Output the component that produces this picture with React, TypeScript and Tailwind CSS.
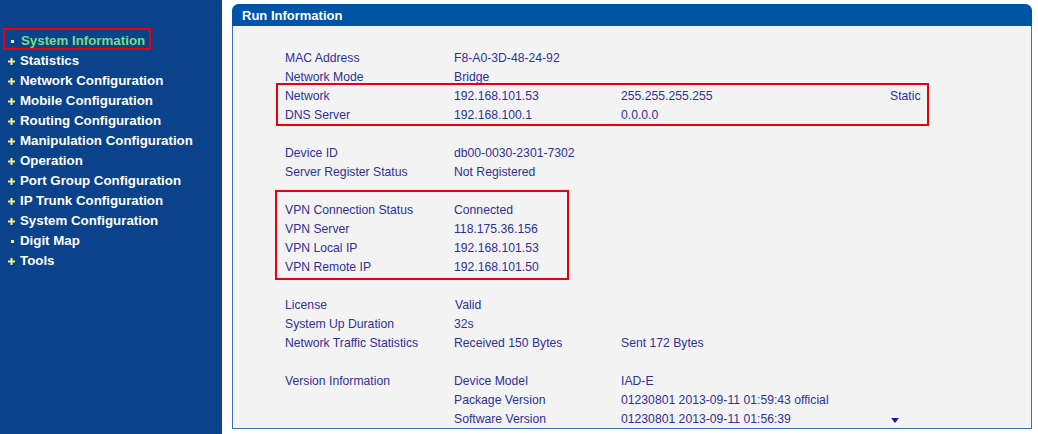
import React from "react";

const menu: { label: string; leaf?: boolean; active?: boolean }[] = [
  { label: "System Information", leaf: true, active: true },
  { label: "Statistics" },
  { label: "Network Configuration" },
  { label: "Mobile Configuration" },
  { label: "Routing Configuration" },
  { label: "Manipulation Configuration" },
  { label: "Operation" },
  { label: "Port Group Configuration" },
  { label: "IP Trunk Configuration" },
  { label: "System Configuration" },
  { label: "Digit Map", leaf: true },
  { label: "Tools" },
];

type Row = [string, React.ReactNode, string?, React.ReactNode?];

function Rows({ rows }: { rows: Row[] }) {
  return (
    <>
      {rows.map((r, i) => (
        <div key={i} className="grid grid-cols-[169px_167px_269px_60px] h-[19px] leading-[19px] whitespace-nowrap">
          <div>{r[0]}</div>
          <div>{r[1]}</div>
          <div>{r[2] ?? ""}</div>
          <div>{r[3] ?? ""}</div>
        </div>
      ))}
    </>
  );
}

function Spacer() {
  return <div className="h-[19px]" />;
}

function DownArrow() {
  return (
    <span className="inline-flex w-[10px] h-[9px] bg-white items-center justify-center mt-[3px]">
      <svg width="8" height="5" viewBox="0 0 8 5">
        <polygon points="0,0 8,0 4,5" fill="#1414d4" />
      </svg>
    </span>
  );
}

export default function App() {
  return (
    <div className="flex w-[1038px] h-[434px] bg-white font-['Liberation_Sans',Arial,sans-serif] overflow-hidden">
      <aside className="w-[222px] h-[434px] bg-[#0a428b] pt-[31px] shrink-0">
        {menu.map((m) => (
          <div key={m.label} className="relative flex items-center h-[20px]">
            <div className="w-[20px] flex justify-center pl-[2px] shrink-0">
              {m.leaf ? (
                <span className="block w-[3px] h-[3px] bg-[#f2ee8c] ml-[2px]" />
              ) : (
                <svg width="7" height="7" viewBox="0 0 7 7">
                  <rect x="0" y="2.5" width="7" height="2" fill="#f2ee8c" />
                  <rect x="2.5" y="0" width="2" height="7" fill="#f2ee8c" />
                </svg>
              )}
            </div>
            <span
              className={`text-[13.3px] font-bold leading-[20px] whitespace-nowrap ${
                m.active ? "text-[#74dc84] pl-px" : "text-white"
              }`}
            >
              {m.label}
            </span>
            {m.active && (
              <span className="absolute left-[3px] top-[-3px] w-[148px] h-[22px] border-2 border-[#e8000d]" />
            )}
          </div>
        ))}
      </aside>

      <main className="pl-[10px] pt-[4px]">
        <div className="w-[800px] h-[425px] flex flex-col border border-t-0 border-[#3a6fc8] rounded-t-[7px] bg-[#f3f3f3]">
          <div className="h-[23px] bg-[#0054a5] rounded-t-[7px] -mx-px pl-[10px] pt-[2px] flex items-center">
            <span className="text-white text-[13px] font-bold">Run Information</span>
          </div>
          <div className="pt-[23px] pl-[52px] text-[12.2px] text-[#30309a]">
            <Rows
              rows={[
                ["MAC Address", "F8-A0-3D-48-24-92"],
                ["Network Mode", "Bridge"],
              ]}
            />
            <div className="relative">
              <Rows
                rows={[
                  ["Network", "192.168.101.53", "255.255.255.255", "Static"],
                  ["DNS Server", "192.168.100.1", "0.0.0.0"],
                ]}
              />
              <span className="absolute left-[-9px] top-[-4px] bottom-[-1px] w-[653px] border-2 border-[#e8000d]" />
            </div>
            <Spacer />
            <Rows
              rows={[
                ["Device ID", "db00-0030-2301-7302"],
                ["Server Register Status", "Not Registered"],
              ]}
            />
            <Spacer />
            <div className="relative">
              <Rows
                rows={[
                  ["VPN Connection Status", "Connected"],
                  ["VPN Server", "118.175.36.156"],
                  ["VPN Local IP", "192.168.101.53"],
                  ["VPN Remote IP", "192.168.101.50"],
                ]}
              />
              <span className="absolute left-[-10px] top-[-11px] bottom-[-3px] w-[294px] border-2 border-[#e8000d]" />
            </div>
            <Spacer />
            <Rows
              rows={[
                ["License", <span key="v" className="pl-px">Valid</span>],
                ["System Up Duration", "32s"],
                ["Network Traffic Statistics", "Received 150 Bytes", "Sent 172 Bytes"],
              ]}
            />
            <Spacer />
            <Rows
              rows={[
                ["Version Information", "Device Model", "IAD-E"],
                ["", "Package Version", "01230801 2013-09-11 01:59:43 official"],
                ["", "Software Version", "01230801 2013-09-11 01:56:39", <DownArrow key="a" />],
              ]}
            />
          </div>
        </div>
      </main>
    </div>
  );
}
